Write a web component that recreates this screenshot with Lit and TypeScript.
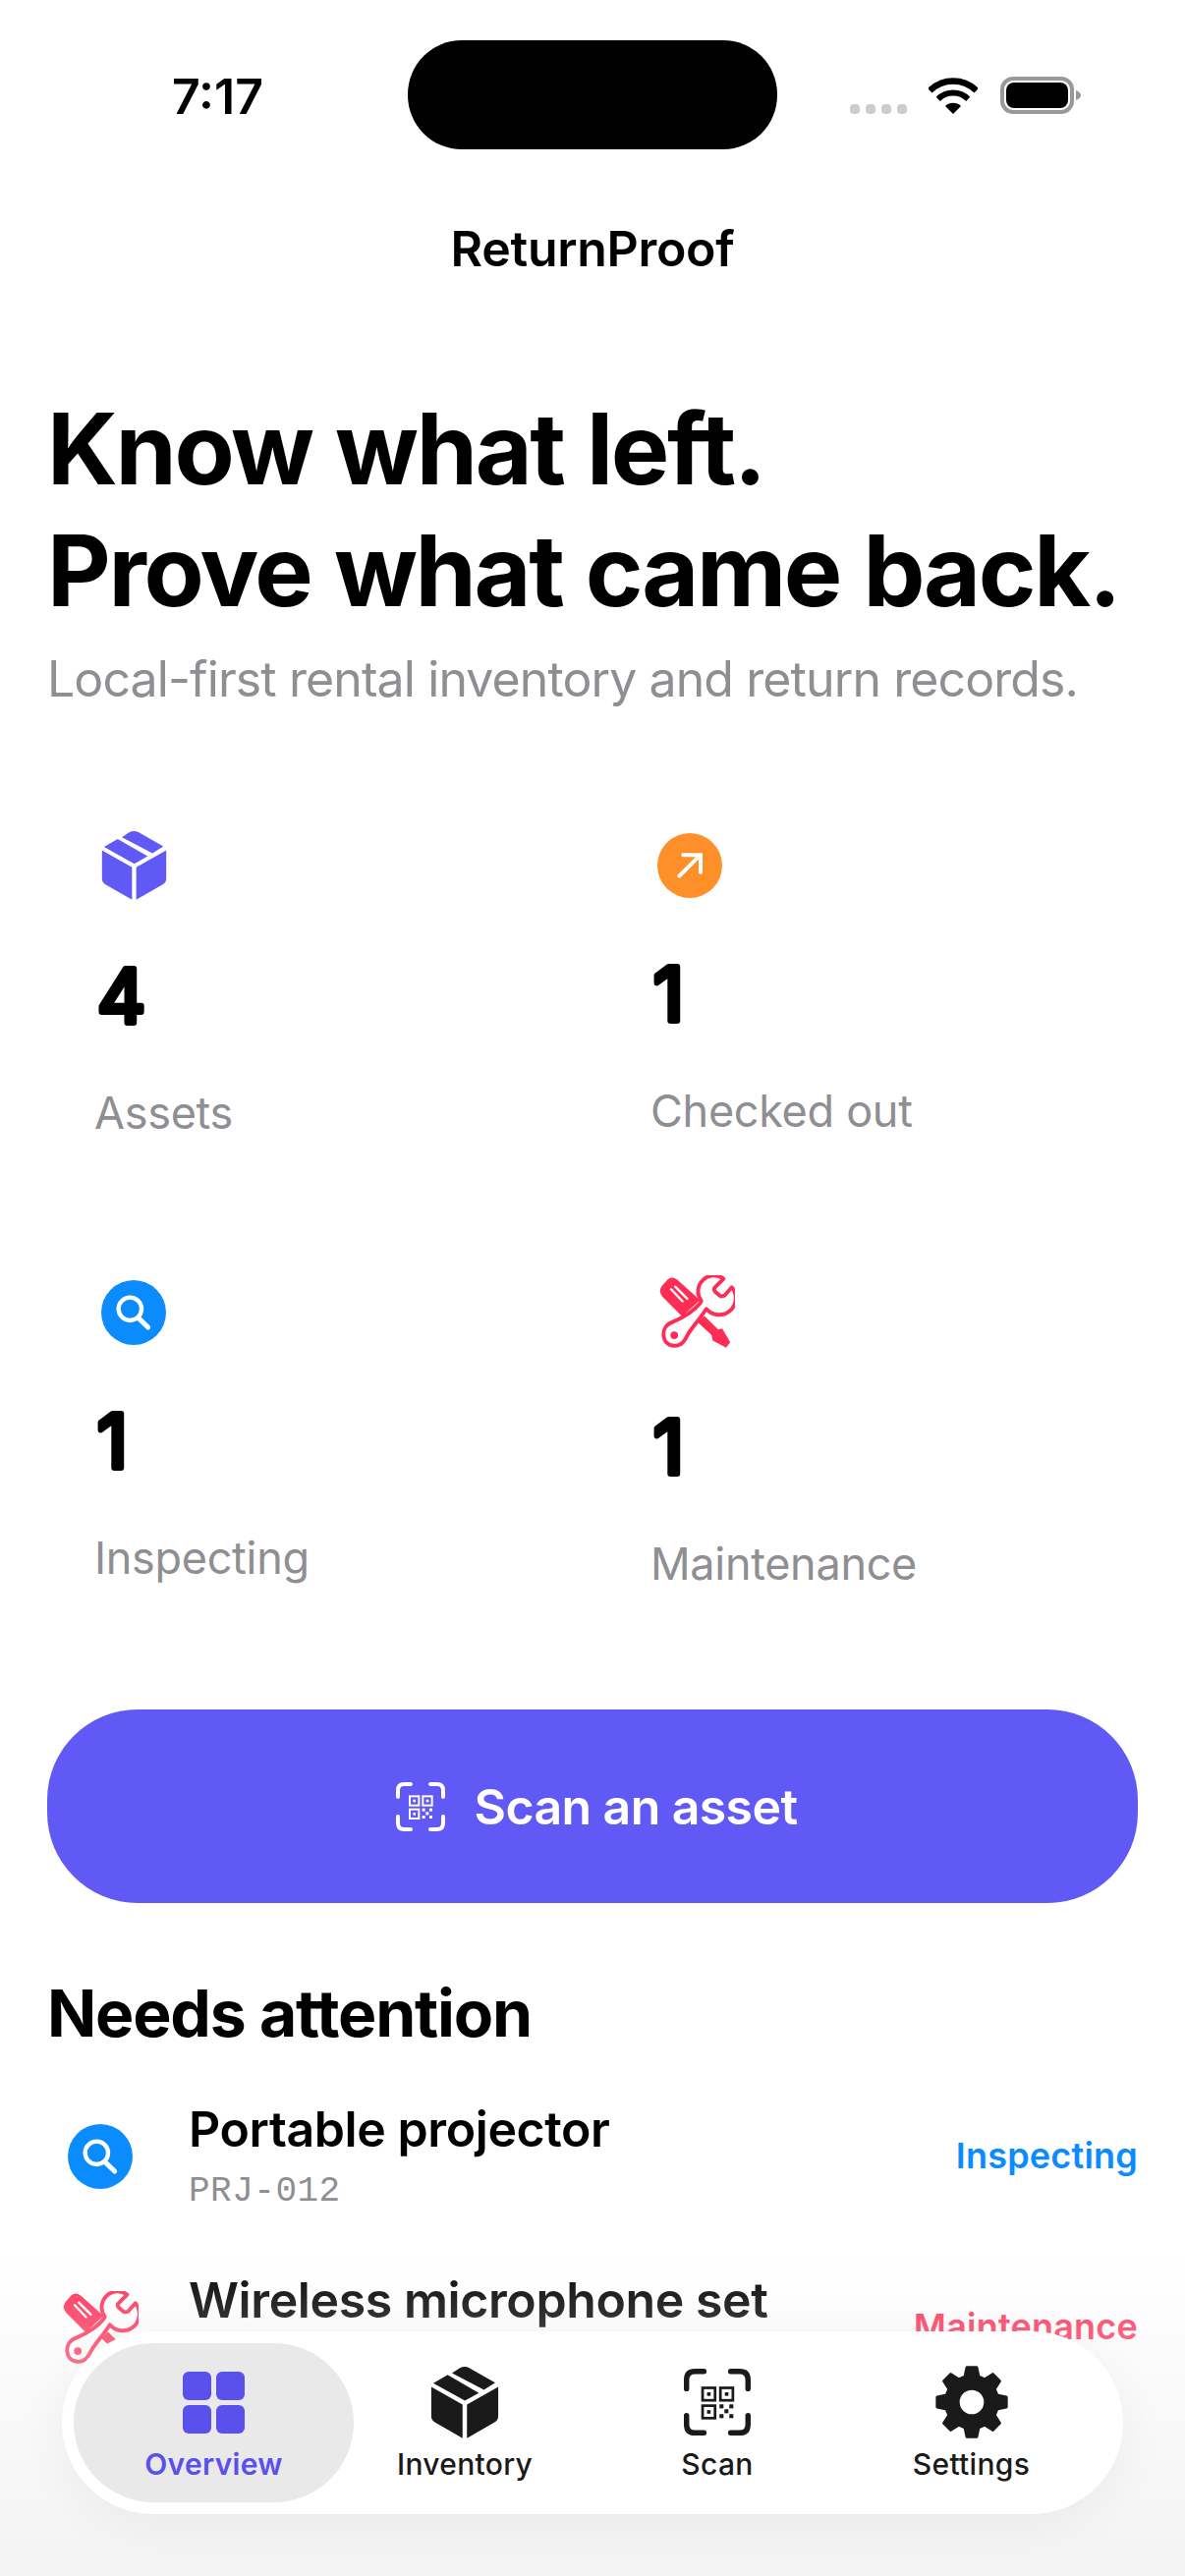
import { LitElement, html, css, svg } from 'lit';
import { customElement } from 'lit/decorators.js';

const RED = '#ff2d55';

// box from the tab bar / Assets stat, drawn in zoomed-crop coordinates
const cubeIcon = (cls: string) => html`
  <svg class=${cls} viewBox="130 75 201 214" fill="currentColor">
    <path d="M193 97 L215 82 Q230 74 245 82 L320 125 L287 146 Z" />
    <path d="M180 102 L272 155 L231 178 L138 126 Z" />
    <path d="M132 137 L224 189 V288 L145 243 Q132 236 132 224 Z" />
    <path d="M237 189 L329 137 V224 Q329 236 316 243 L237 288 Z" />
  </svg>
`;

const arrowIcon = html`
  <svg class="icon circle" viewBox="0 0 198 198">
    <circle cx="99" cy="99" r="99" fill="#ff9029" />
    <path
      d="M67 131 L130 68 M79 67 H132 V119"
      fill="none"
      stroke="#fff"
      stroke-width="12"
      stroke-linecap="round"
    />
  </svg>
`;

const searchIcon = (cls: string) => html`
  <svg class=${cls} viewBox="0 0 198 198">
    <circle cx="99" cy="99" r="99" fill="#0a8cff" />
    <circle cx="88" cy="88" r="35" fill="none" stroke="#fff" stroke-width="13" />
    <path d="M113 115 L143 144" stroke="#fff" stroke-width="15" stroke-linecap="round" />
  </svg>
`;

const toolsIcon = (cls: string) => html`
  <svg class=${cls} viewBox="120 85 238 230">
    <path
      fill=${RED}
      d="M262 212 L305 255 L318 252 L343 295 L330 312 L288 290 L284 272 L240 232 Z"
    />
    <path
      fill=${RED}
      d="M146 98 Q160 86 176 98 L248 162 L192 214 L130 152 Q116 136 128 118 Z"
    />
    <path d="M157 128 L193 166 M170 120 L208 158" stroke="#fff" stroke-width="7" stroke-linecap="round" />
    <path
      fill="#fff"
      stroke=${RED}
      stroke-width="12"
      stroke-linejoin="round"
      d="M322 95 A50 50 0 0 0 252 165 L248 172 C230 195 200 215 160 232 C122 246 125 302 165 306 C190 308 200 290 210 270 C225 245 245 225 268 190 A50 50 0 0 0 348 122 L325 148 Q318 152 310 148 L295 135 Q290 128 295 122 Z"
    />
    <circle cx="167" cy="273" r="12" fill=${RED} />
  </svg>
`;

const qrIcon = (cls: string) => html`
  <svg class=${cls} viewBox="0 0 150 150" fill="none" stroke="currentColor">
    <path
      stroke-width="12"
      stroke-linecap="round"
      d="M6 45 V25 Q6 6 25 6 H45 M105 6 H125 Q144 6 144 25 V45 M144 105 V125 Q144 144 125 144 H105 M45 144 H25 Q6 144 6 125 V105"
    />
    <g stroke-width="6">
      <rect x="42" y="43" width="28" height="28" />
      <rect x="82" y="43" width="28" height="28" />
      <rect x="42" y="83" width="28" height="28" />
    </g>
    <g fill="currentColor" stroke="none">
      <rect x="52" y="53" width="8" height="8" />
      <rect x="92" y="53" width="8" height="8" />
      <rect x="52" y="93" width="8" height="8" />
      <rect x="80" y="80" width="9" height="9" />
      <rect x="102" y="80" width="9" height="9" />
      <rect x="91" y="91" width="9" height="9" />
      <rect x="80" y="102" width="9" height="9" />
      <rect x="102" y="102" width="9" height="9" />
    </g>
  </svg>
`;

function gearPath() {
  const pt = (r: number, deg: number) => {
    const a = ((deg - 90) * Math.PI) / 180;
    return `${(36 + r * Math.cos(a)).toFixed(2)} ${(36 + r * Math.sin(a)).toFixed(2)}`;
  };
  let d = '';
  for (let i = 0; i < 8; i++) {
    const c = i * 45;
    d += `${i ? 'L' : 'M'}${pt(26, c - 15)} L${pt(34.5, c - 8)} L${pt(34.5, c + 8)} L${pt(26, c + 15)} `;
  }
  return `${d}Z M36 22.5 A13.5 13.5 0 1 0 36 49.5 A13.5 13.5 0 1 0 36 22.5 Z`;
}

const gearIcon = html`
  <svg class="tab-gear" viewBox="0 0 72 72">
    ${svg`<path d=${gearPath()} fill="currentColor" fill-rule="evenodd" stroke="currentColor" stroke-width="3" stroke-linejoin="round" />`}
  </svg>
`;

const gridIcon = html`
  <svg class="tab-grid" viewBox="0 0 63 63" fill="currentColor">
    <rect x="0" y="0" width="29" height="29" rx="6" />
    <rect x="34" y="0" width="29" height="29" rx="6" />
    <rect x="0" y="34" width="29" height="29" rx="6" />
    <rect x="34" y="34" width="29" height="29" rx="6" />
  </svg>
`;

@customElement('app-root')
export class AppRoot extends LitElement {
  static styles = css`
    :host {
      display: block;
      font-family: Inter, 'Noto Sans', sans-serif;
      color: #000;
    }

    .page {
      position: relative;
      width: 1206px;
      height: 2622px;
      overflow: hidden;
      background: #fff;
    }

    .status {
      display: grid;
      grid-template-columns: 415px 376px 415px;
      padding-top: 41px;
    }
    .time {
      padding: 30px 0 0 175px;
      font-size: 50px;
      line-height: 54px;
      font-weight: 600;
    }
    .island {
      height: 111px;
      border-radius: 55px;
      background: #000;
    }
    .status-right {
      display: flex;
      align-items: flex-end;
      justify-content: flex-end;
      height: 75px;
      padding-right: 106px;
    }
    .dots {
      display: flex;
      gap: 6px;
      margin: 0 22px 0 0;
    }
    .dots i {
      width: 10px;
      height: 10px;
      border-radius: 4px;
      background: #cdcdcd;
    }
    .wifi {
      width: 50px;
      height: 37px;
      margin-right: 23px;
    }
    .battery {
      width: 82px;
      height: 38px;
    }

    .nav-title {
      margin-top: 71px;
      text-align: center;
      font-size: 50px;
      line-height: 60px;
      font-weight: 600;
      letter-spacing: -0.3px;
    }

    h1 {
      margin: 112px 0 0;
      padding: 0 48px;
      font-size: 100px;
      line-height: 124px;
      font-weight: 700;
      letter-spacing: -2.35px;
      word-spacing: 2px;
      white-space: nowrap;
    }
    .lead {
      margin: 18px 0 0;
      padding: 0 48px;
      font-size: 50px;
      line-height: 60px;
      letter-spacing: -0.9px;
      color: #8e8e93;
      white-space: nowrap;
    }

    .stats {
      display: grid;
      grid-template-columns: 1fr 1fr;
      column-gap: 22px;
      row-gap: 136px;
      align-items: center;
      margin: 124px 48px 0;
    }
    .stat {
      display: flex;
      flex-direction: column;
      align-items: flex-start;
      padding-left: 48px;
    }
    .icon {
      display: block;
      margin-left: 7px;
    }
    .cube {
      width: 67px;
      height: 71px;
      color: #6159f6;
    }
    .circle {
      width: 66px;
      height: 66px;
    }
    .tools {
      width: 77px;
      height: 75px;
      margin: 2px 0 2px 9px;
    }
    .value {
      display: block;
      width: 100px;
      height: 100px;
      margin-top: 47px;
    }
    /* lighter weight plus a round-joined stroke stands in for the rounded system digits */
    .value text {
      font-size: 76px;
      font-weight: 400;
      stroke: #000;
      stroke-width: 6px;
      stroke-linejoin: round;
      stroke-linecap: round;
    }
    .label {
      margin-top: 43px;
      font-size: 45px;
      line-height: 54px;
      letter-spacing: -0.3px;
      color: #8e8e93;
    }

    .cta {
      display: flex;
      align-items: center;
      justify-content: center;
      gap: 30px;
      height: 197px;
      margin: 121px 48px 0;
      padding-left: 8px;
      border-radius: 92px;
      background: #6159f6;
      color: #fff;
      font-size: 50px;
      font-weight: 600;
      letter-spacing: -0.6px;
    }
    .cta-icon {
      width: 50px;
      height: 50px;
    }

    h2 {
      margin: 72px 48px 0;
      font-size: 66px;
      line-height: 80px;
      font-weight: 700;
      letter-spacing: -1.2px;
    }

    .rows {
      display: flex;
      flex-direction: column;
      gap: 58px;
      margin: 48px 48px 0;
    }
    .row {
      display: flex;
      align-items: center;
    }
    .row-icon {
      display: flex;
      justify-content: center;
      flex: none;
      width: 108px;
      margin-right: 36px;
    }
    .row-circle {
      width: 66px;
      height: 66px;
    }
    .row-tools {
      width: 77px;
      height: 75px;
    }
    .row-main {
      flex: 1;
    }
    .row-title {
      font-size: 50px;
      line-height: 60px;
      font-weight: 600;
      letter-spacing: -0.4px;
    }
    .row-code {
      margin-top: 12px;
      font-family: 'Liberation Mono', monospace;
      font-size: 36px;
      line-height: 44px;
      letter-spacing: 0.5px;
      color: #8e8e93;
    }
    .row-state {
      margin-top: -3px;
      font-size: 36px;
      font-weight: 600;
      letter-spacing: 0.2px;
    }
    .row-state.inspecting {
      color: #0a8cff;
    }
    .row-state.maintenance {
      color: #ff2d55;
    }

    .fade {
      position: absolute;
      left: 0;
      right: 0;
      bottom: 0;
      height: 332px;
      background: linear-gradient(rgba(243, 243, 243, 0), #f3f3f3);
    }

    .tabbar {
      position: absolute;
      left: 63px;
      right: 63px;
      top: 2373px;
      display: grid;
      grid-template-columns: repeat(4, 1fr);
      height: 186px;
      padding: 35px 26px 0;
      box-sizing: border-box;
      border-radius: 93px;
      background: #fff;
      box-shadow: 0 10px 50px rgba(0, 0, 0, 0.05);
    }
    .tab {
      position: relative;
      display: flex;
      flex-direction: column;
      align-items: center;
      color: #1a1a1a;
      font-size: 30px;
      line-height: 36px;
      font-weight: 500;
      letter-spacing: 0.3px;
    }
    .tab:nth-child(2),
    .tab:nth-child(3) {
      padding-right: 3px;
    }
    .tab.active {
      color: #5a50ec;
      font-weight: 600;
    }
    .tab.active::before {
      content: '';
      position: absolute;
      left: -14px;
      right: -14px;
      top: -23px;
      height: 162px;
      border-radius: 81px;
      background: #e9e9ea;
    }
    .tab-icon {
      position: relative;
      display: flex;
      align-items: center;
      justify-content: center;
      height: 74px;
      margin-bottom: 8px;
    }
    .tab-label {
      position: relative;
    }
    .tab-grid {
      width: 63px;
      height: 63px;
    }
    .tab-cube {
      width: 70px;
      height: 74px;
    }
    .tab-qr {
      width: 68px;
      height: 68px;
    }
    .tab-gear {
      width: 74px;
      height: 74px;
    }
  `;

  private stats = [
    { icon: cubeIcon('icon cube'), value: '4', label: 'Assets' },
    { icon: arrowIcon, value: '1', label: 'Checked out' },
    { icon: searchIcon('icon circle'), value: '1', label: 'Inspecting' },
    { icon: toolsIcon('icon tools'), value: '1', label: 'Maintenance' },
  ];

  private rows = [
    {
      icon: searchIcon('row-circle'),
      title: 'Portable projector',
      code: 'PRJ-012',
      state: 'Inspecting',
      cls: 'inspecting',
    },
    {
      icon: toolsIcon('row-tools'),
      title: 'Wireless microphone set',
      code: 'MIC-004',
      state: 'Maintenance',
      cls: 'maintenance',
    },
  ];

  private tabs = [
    { icon: gridIcon, label: 'Overview', active: true },
    { icon: cubeIcon('tab-cube'), label: 'Inventory', active: false },
    { icon: qrIcon('tab-qr'), label: 'Scan', active: false },
    { icon: gearIcon, label: 'Settings', active: false },
  ];

  render() {
    return html`
      <div class="page">
        <div class="status">
          <div class="time">7:17</div>
          <div class="island"></div>
          <div class="status-right">
            <div class="dots"><i></i><i></i><i></i><i></i></div>
            <svg class="wifi" viewBox="0 0 50 37" fill="none" stroke="#000">
              <path stroke-width="6.5" d="M1.3 13.3 A33.5 33.5 0 0 1 48.7 13.3" />
              <path stroke-width="6" d="M9.8 21.8 A21.5 21.5 0 0 1 40.2 21.8" />
              <path fill="#000" stroke="none" d="M25 37 L17 29 A11.3 11.3 0 0 1 33 29 Z" />
            </svg>
            <svg class="battery" viewBox="0 0 82 38">
              <rect x="2" y="2" width="71" height="34" rx="11" fill="none" stroke="#999" stroke-width="4" />
              <rect x="6" y="6" width="63" height="26" rx="8" fill="#000" />
              <path d="M77 14 Q82 16 82 19 Q82 22 77 24 Z" fill="#999" />
            </svg>
          </div>
        </div>

        <div class="nav-title">ReturnProof</div>

        <h1>Know what left.<br />Prove what came back.</h1>
        <p class="lead">Local-first rental inventory and return records.</p>

        <div class="stats">
          ${this.stats.map(
            (s) => html`
              <div class="stat">
                ${s.icon}
                <svg class="value" viewBox="0 0 100 100">
                  ${svg`<text x="3" y="77.5">${s.value}</text>`}
                </svg>
                <div class="label">${s.label}</div>
              </div>
            `
          )}
        </div>

        <div class="cta">${qrIcon('cta-icon')}<span>Scan an asset</span></div>

        <h2>Needs attention</h2>
        <div class="rows">
          ${this.rows.map(
            (r) => html`
              <div class="row">
                <div class="row-icon">${r.icon}</div>
                <div class="row-main">
                  <div class="row-title">${r.title}</div>
                  <div class="row-code">${r.code}</div>
                </div>
                <div class="row-state ${r.cls}">${r.state}</div>
              </div>
            `
          )}
        </div>

        <div class="fade"></div>

        <div class="tabbar">
          ${this.tabs.map(
            (t) => html`
              <div class="tab ${t.active ? 'active' : ''}">
                <div class="tab-icon">${t.icon}</div>
                <div class="tab-label">${t.label}</div>
              </div>
            `
          )}
        </div>
      </div>
    `;
  }
}
